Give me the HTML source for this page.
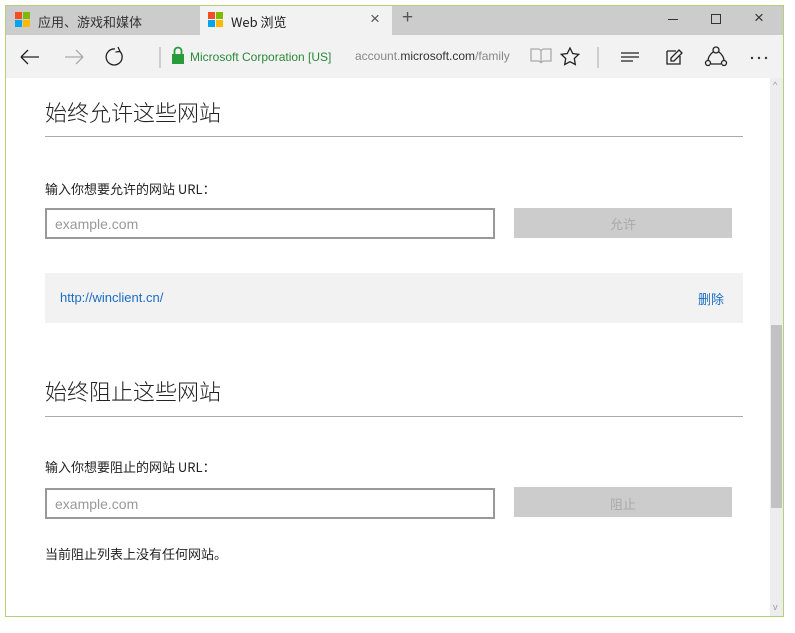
<!DOCTYPE html>
<html><head><meta charset="utf-8"><style>
*{margin:0;padding:0;box-sizing:border-box}
body{width:795px;height:633px;background:#fff;position:relative;overflow:hidden;font-family:"Liberation Sans","Noto Sans CJK SC",sans-serif}
.a{position:absolute}
#win{left:5px;top:5px;width:779px;height:612px;border:1px solid #b5cf7a;background:#fff}
.cn{font-family:"Microsoft YaHei","Noto Sans CJK SC",sans-serif}
.logo{width:15px;height:15px;display:grid;grid-template-columns:7px 7px;gap:1px}
.logo i{display:block}
</style></head><body>
<div id="win" class="a"></div>
<div class="a" style="left:6px;top:6px;width:777px;height:29px;background:#cccccc"></div>
<div class="a" style="left:200px;top:6px;width:192px;height:29px;background:#f2f2f2"></div>
<div class="a logo" style="left:15px;top:12px"><i style="background:#f25022"></i><i style="background:#7fba00"></i><i style="background:#00a4ef"></i><i style="background:#ffb900"></i></div>
<div class="a cn" style="left:38px;top:12px;font-size:13px;color:#333">应用、游戏和媒体</div>
<div class="a logo" style="left:208px;top:12px"><i style="background:#f25022"></i><i style="background:#7fba00"></i><i style="background:#00a4ef"></i><i style="background:#ffb900"></i></div>
<div class="a cn" style="left:231px;top:12px;font-size:13px;color:#222">Web 浏览</div>
<div class="a" style="left:370px;top:9px;font-size:17px;color:#555">×</div>
<div class="a" style="left:402px;top:7px;font-size:19px;color:#555;font-weight:300">+</div>
<div class="a" style="left:668px;top:19px;width:10px;height:1px;background:#333"></div>
<div class="a" style="left:711px;top:14px;width:10px;height:10px;border:1px solid #333"></div>
<div class="a" style="left:754px;top:8px;font-size:17px;color:#333">×</div>
<div class="a" style="left:6px;top:35px;width:777px;height:43px;background:#f2f2f2"></div>
<svg class="a" style="left:0;top:35px" width="795" height="43">
<g fill="none" stroke="#222" stroke-width="1.3">
<path d="M21 22h18M21 22l7-7M21 22l7 7"/>
<path d="M83 22h-18M83 22l-7-7M83 22l-7 7" stroke="#aaa"/>
<path d="M115 14a8 8 0 1 0 5 2.5M118 12l2 4.5-4.5 .5"/>
<line x1="160" y1="12" x2="160" y2="33" stroke="#bbb"/>
<path d="M531 14h7q2 0 3 2v12q-1-2-3-2h-7zM551 14h-7q-2 0-3 2v12q1-2 3-2h7z" stroke="#aaa"/>
<path d="M570 13l2.7 5.5 6 .8-4.4 4.2 1 6-5.3-2.8-5.3 2.8 1-6-4.4-4.2 6-.8z"/>
<line x1="598" y1="12" x2="598" y2="33" stroke="#bbb"/>
<path d="M621 18h18M621 22h18M621 26h12"/>
<path d="M667 16h9M667 16v13h13v-8M679 15l3 3-8 8h-3v-3z"/>
<path d="M713 17q-5 4-5 9M719 17q5 4 5 9M711 29h10"/><circle cx="716" cy="15" r="3"/><circle cx="708" cy="28" r="2.5"/><circle cx="724" cy="28" r="2.5"/>
</g>
<g fill="#333"><circle cx="752" cy="23" r="1.2"/><circle cx="759" cy="23" r="1.2"/><circle cx="766" cy="23" r="1.2"/></g>
<rect x="172" y="19" width="12" height="10" fill="#2a9b3a"/>
<path d="M174.5 19v-3a3.5 3.5 0 0 1 7 0v3" fill="none" stroke="#2a9b3a" stroke-width="1.8"/>
</svg>
<div class="a" style="left:190px;top:50px;font-size:12px;color:#2a8a3a">Microsoft Corporation [US]</div>
<div class="a" style="left:355px;top:49px;font-size:12px;color:#888;white-space:nowrap;width:160px;overflow:hidden">account.<span style="color:#333">microsoft.com</span>/family</div>
<div class="a" style="left:770px;top:78px;width:13px;height:538px;background:#ededed"></div>
<div class="a" style="left:771px;top:325px;width:11px;height:183px;background:#c2c2c2"></div>
<div class="a" style="left:773px;top:80px;font-size:9px;color:#999">^</div>
<div class="a" style="left:773px;top:602px;font-size:9px;color:#999">v</div>
<div class="a cn" style="left:45px;top:96px;font-size:22px;color:#222;font-weight:300">始终允许这些网站</div>
<div class="a" style="left:45px;top:136px;width:698px;height:1px;background:#aaa"></div>
<div class="a cn" style="left:45px;top:179px;font-size:13px;color:#222">输入你想要允许的网站 URL：</div>
<div class="a" style="left:45px;top:208px;width:450px;height:31px;border:2px solid #999;background:#fff"></div>
<div class="a" style="left:55px;top:216px;font-size:14px;color:#999">example.com</div>
<div class="a" style="left:514px;top:208px;width:218px;height:30px;background:#ccc"></div>
<div class="a cn" style="left:610px;top:214px;font-size:13px;color:#aaa">允许</div>
<div class="a" style="left:45px;top:273px;width:698px;height:50px;background:#f2f2f2"></div>
<div class="a" style="left:60px;top:290px;font-size:13px;color:#1a6dc4">http://winclient.cn/</div>
<div class="a cn" style="left:698px;top:289px;font-size:13px;color:#1a6dc4">删除</div>
<div class="a cn" style="left:45px;top:375px;font-size:22px;color:#222;font-weight:300">始终阻止这些网站</div>
<div class="a" style="left:45px;top:416px;width:698px;height:1px;background:#aaa"></div>
<div class="a cn" style="left:45px;top:457px;font-size:13px;color:#222">输入你想要阻止的网站 URL：</div>
<div class="a" style="left:45px;top:488px;width:450px;height:31px;border:2px solid #999;background:#fff"></div>
<div class="a" style="left:55px;top:496px;font-size:14px;color:#999">example.com</div>
<div class="a" style="left:514px;top:487px;width:218px;height:30px;background:#ccc"></div>
<div class="a cn" style="left:610px;top:494px;font-size:13px;color:#aaa">阻止</div>
<div class="a cn" style="left:45px;top:544px;font-size:13px;color:#222">当前阻止列表上没有任何网站。</div>
</body></html>
